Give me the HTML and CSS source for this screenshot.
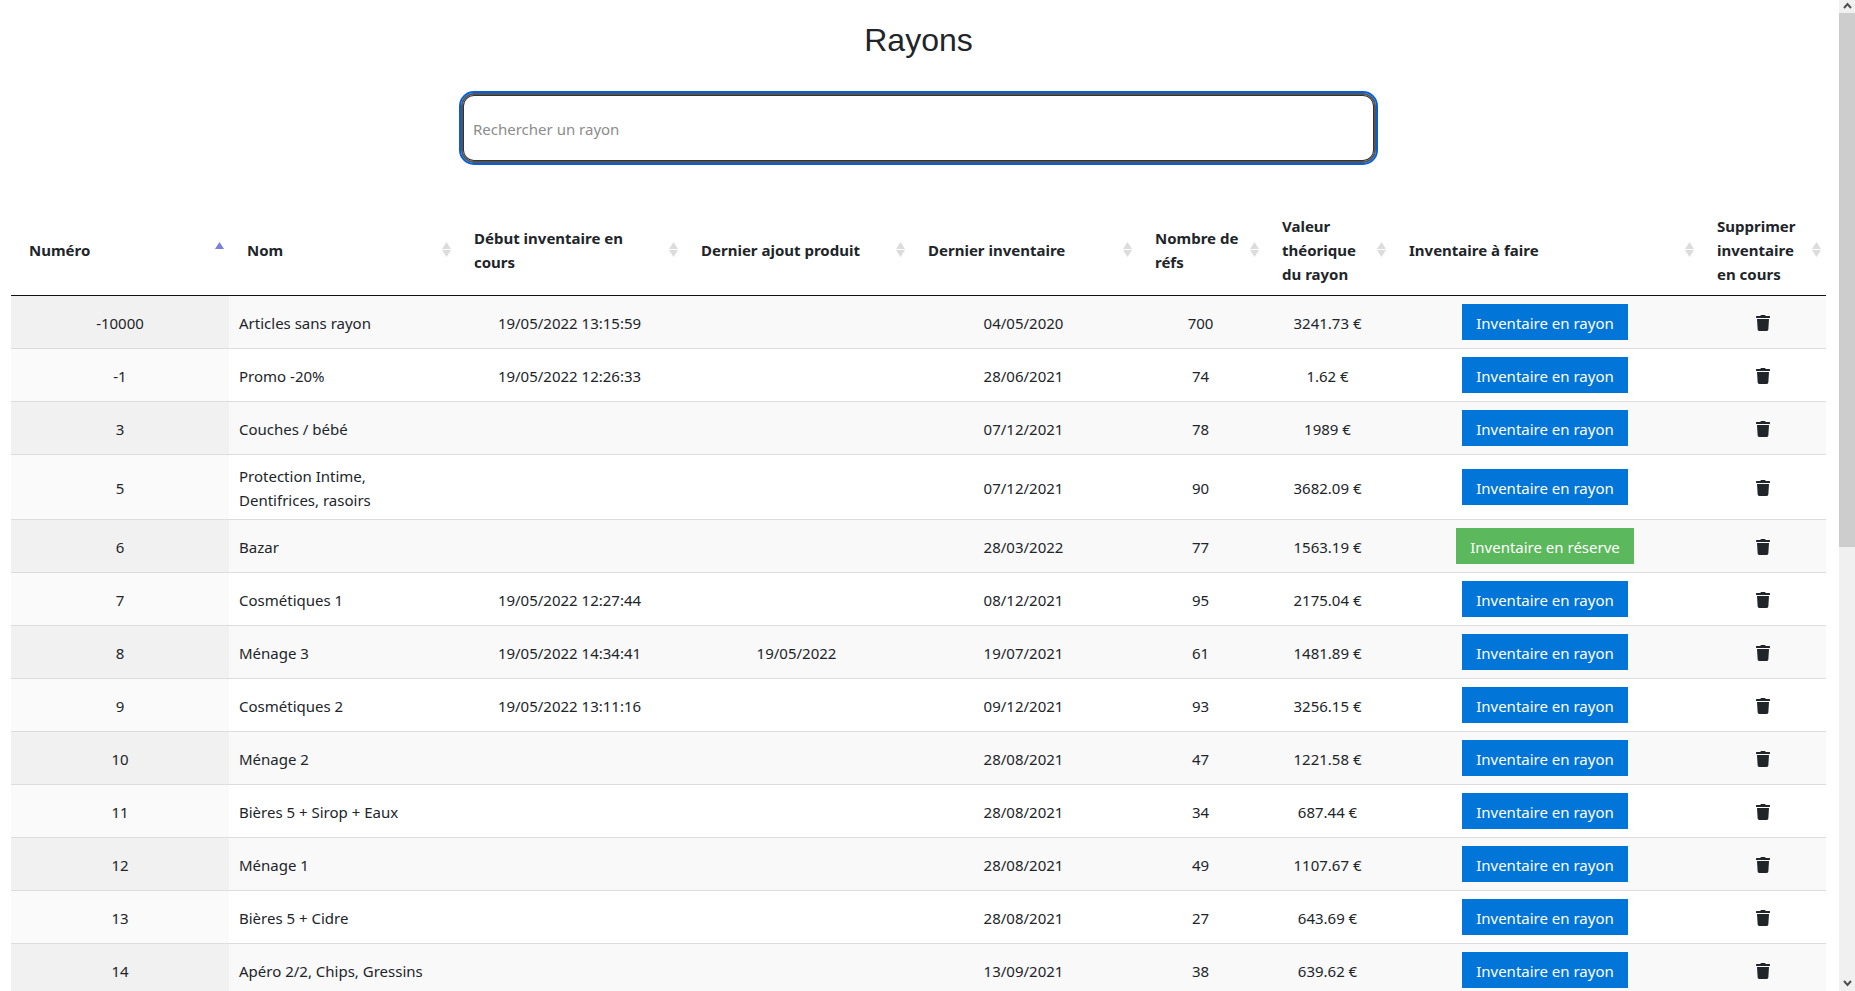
FILE: index.html
```html
<!DOCTYPE html>
<html lang="fr">
<head>
<meta charset="utf-8">
<title>Rayons</title>
<link rel="stylesheet" href="styles.css">
</head>
<body>
<svg class="sprite" aria-hidden="true">
  <symbol id="trash" viewBox="0 0 448 512"><path d="M432 32H312l-9.4-18.7A24 24 0 0 0 281.1 0H166.8a23.72 23.72 0 0 0-21.4 13.3L136 32H16A16 16 0 0 0 0 48v32a16 16 0 0 0 16 16h416a16 16 0 0 0 16-16V48a16 16 0 0 0-16-16zM53.2 467a48 48 0 0 0 47.9 45h245.8a48 48 0 0 0 47.9-45L416 128H32z"/></symbol>
  <symbol id="sort" viewBox="0 0 9 15"><path class="up" d="M4.5 0L9 7H0z"/><path class="down" d="M0 8h9l-4.500 7z"/></symbol>
</svg>
<div class="page">
  <main class="content">
    <h1 class="title">Rayons</h1>
    <input class="search" type="text" placeholder="Rechercher un rayon" aria-label="Rechercher un rayon">
    <table class="rayons">
      <colgroup><col class="c-num"><col class="c-wide"><col class="c-wide"><col class="c-wide"><col class="c-wide"><col class="c-small"><col class="c-small"><col class="c-todo"><col class="c-small"></colgroup>
      <thead>
        <tr>
          <th><div class="head">Numéro<svg class="sort asc" viewBox="0 0 9 15"><path d="M4.500 0L9 7H0z"/></svg></div></th>
          <th><div class="head">Nom<svg class="sort"><use href="#sort"/></svg></div></th>
          <th><div class="head">Début inventaire en cours<svg class="sort"><use href="#sort"/></svg></div></th>
          <th><div class="head">Dernier ajout produit<svg class="sort"><use href="#sort"/></svg></div></th>
          <th><div class="head">Dernier inventaire<svg class="sort"><use href="#sort"/></svg></div></th>
          <th><div class="head">Nombre de réfs<svg class="sort"><use href="#sort"/></svg></div></th>
          <th><div class="head">Valeur théorique du rayon<svg class="sort"><use href="#sort"/></svg></div></th>
          <th><div class="head">Inventaire à faire<svg class="sort"><use href="#sort"/></svg></div></th>
          <th><div class="head">Supprimer inventaire en cours<svg class="sort"><use href="#sort"/></svg></div></th>
        </tr>
      </thead>
      <tbody>
        <tr><td>-10000</td><td>Articles sans rayon</td><td>19/05/2022 13:15:59</td><td></td><td>04/05/2020</td><td>700</td><td>3241.73 €</td><td class="action"><button class="btn">Inventaire en rayon</button></td><td><button class="delete" aria-label="Supprimer"><svg><use href="#trash"/></svg></button></td></tr>
        <tr><td>-1</td><td>Promo -20%</td><td>19/05/2022 12:26:33</td><td></td><td>28/06/2021</td><td>74</td><td>1.62 €</td><td class="action"><button class="btn">Inventaire en rayon</button></td><td><button class="delete" aria-label="Supprimer"><svg><use href="#trash"/></svg></button></td></tr>
        <tr><td>3</td><td>Couches / bébé</td><td></td><td></td><td>07/12/2021</td><td>78</td><td>1989 €</td><td class="action"><button class="btn">Inventaire en rayon</button></td><td><button class="delete" aria-label="Supprimer"><svg><use href="#trash"/></svg></button></td></tr>
        <tr><td>5</td><td>Protection Intime, Dentifrices, rasoirs</td><td></td><td></td><td>07/12/2021</td><td>90</td><td>3682.09 €</td><td class="action"><button class="btn">Inventaire en rayon</button></td><td><button class="delete" aria-label="Supprimer"><svg><use href="#trash"/></svg></button></td></tr>
        <tr><td>6</td><td>Bazar</td><td></td><td></td><td>28/03/2022</td><td>77</td><td>1563.19 €</td><td class="action"><button class="btn reserve">Inventaire en réserve</button></td><td><button class="delete" aria-label="Supprimer"><svg><use href="#trash"/></svg></button></td></tr>
        <tr><td>7</td><td>Cosmétiques 1</td><td>19/05/2022 12:27:44</td><td></td><td>08/12/2021</td><td>95</td><td>2175.04 €</td><td class="action"><button class="btn">Inventaire en rayon</button></td><td><button class="delete" aria-label="Supprimer"><svg><use href="#trash"/></svg></button></td></tr>
        <tr><td>8</td><td>Ménage 3</td><td>19/05/2022 14:34:41</td><td>19/05/2022</td><td>19/07/2021</td><td>61</td><td>1481.89 €</td><td class="action"><button class="btn">Inventaire en rayon</button></td><td><button class="delete" aria-label="Supprimer"><svg><use href="#trash"/></svg></button></td></tr>
        <tr><td>9</td><td>Cosmétiques 2</td><td>19/05/2022 13:11:16</td><td></td><td>09/12/2021</td><td>93</td><td>3256.15 €</td><td class="action"><button class="btn">Inventaire en rayon</button></td><td><button class="delete" aria-label="Supprimer"><svg><use href="#trash"/></svg></button></td></tr>
        <tr><td>10</td><td>Ménage 2</td><td></td><td></td><td>28/08/2021</td><td>47</td><td>1221.58 €</td><td class="action"><button class="btn">Inventaire en rayon</button></td><td><button class="delete" aria-label="Supprimer"><svg><use href="#trash"/></svg></button></td></tr>
        <tr><td>11</td><td>Bières 5 + Sirop + Eaux</td><td></td><td></td><td>28/08/2021</td><td>34</td><td>687.44 €</td><td class="action"><button class="btn">Inventaire en rayon</button></td><td><button class="delete" aria-label="Supprimer"><svg><use href="#trash"/></svg></button></td></tr>
        <tr><td>12</td><td>Ménage 1</td><td></td><td></td><td>28/08/2021</td><td>49</td><td>1107.67 €</td><td class="action"><button class="btn">Inventaire en rayon</button></td><td><button class="delete" aria-label="Supprimer"><svg><use href="#trash"/></svg></button></td></tr>
        <tr><td>13</td><td>Bières 5 + Cidre</td><td></td><td></td><td>28/08/2021</td><td>27</td><td>643.69 €</td><td class="action"><button class="btn">Inventaire en rayon</button></td><td><button class="delete" aria-label="Supprimer"><svg><use href="#trash"/></svg></button></td></tr>
        <tr><td>14</td><td>Apéro 2/2, Chips, Gressins</td><td></td><td></td><td>13/09/2021</td><td>38</td><td>639.62 €</td><td class="action"><button class="btn">Inventaire en rayon</button></td><td><button class="delete" aria-label="Supprimer"><svg><use href="#trash"/></svg></button></td></tr>
      </tbody>
    </table>
  </main>
  <div class="scrollbar" aria-hidden="true">
    <svg class="arrow" viewBox="0 0 9 7"><path d="M1 6l3.500-4L8 6"/></svg>
    <div class="track"><div class="thumb"></div></div>
    <svg class="arrow" viewBox="0 0 9 7"><path d="M1 1l3.500 4L8 1"/></svg>
  </div>
</div>
</body>
</html>
```
FILE: styles.css
```css
* { box-sizing: border-box; }

body {
  margin: 0;
  background: #fff;
  color: #212529;
  font: 15px/24px "Noto Sans", "Open Sans", sans-serif;
}

.sprite { display: none; }

.page {
  display: flex;
  height: 100vh;
  overflow: hidden;
}

.content {
  flex: 1;
  min-width: 0;
  padding: 21px 13px 0 11px;
  overflow: hidden;
}

.title {
  margin: 0;
  text-align: center;
  font: 400 32px/38px "Liberation Sans", Arial, sans-serif;
}

.search {
  display: block;
  width: 50%;
  min-width: 915px;
  height: 70px;
  margin: 34px auto 44px;
  padding: 2px 10px 0;
  border: 2px solid #555;
  border-radius: 13px;
  outline: 2px solid #0060df;
  background: #fff;
  box-shadow: inset 0 0 0 1px #333;
  color: inherit;
  font: inherit;
}

.search::placeholder { color: #8c8c8c; opacity: 1; }

.rayons {
  width: 100%;
  table-layout: fixed;
  border-collapse: separate;
  border-spacing: 0;
}

.c-num { width: 218px; }
.c-wide { width: 227px; }
.c-small { width: 127px; }

.rayons th {
  padding: 7px 5px 9px 18px;
  border-bottom: 1px solid #111;
  text-align: left;
  font-weight: 700;
}

.head {
  display: flex;
  align-items: center;
  justify-content: space-between;
  gap: 4px;
}

.sort {
  flex: none;
  width: 9px;
  height: 15px;
  margin-bottom: 1px;
  fill: #dcdcdc;
}

.sort.asc { fill: #7b7fe0; }

.rayons td {
  padding: 9px 10px 7px;
  border-bottom: 1px solid #ddd;
  text-align: center;
}

.rayons td.action { padding: 8px 10px; }
.rayons td:nth-child(2) { text-align: left; }
.rayons tbody tr:nth-child(odd) { background: #f9f9f9; }
.rayons tbody tr:nth-child(odd) td:first-child { background: #f1f1f1; }
.rayons tbody tr:nth-child(even) td:first-child { background: #fafafa; }

.btn {
  display: block;
  height: 36px;
  margin: 0 auto;
  padding: 2px 14px 0;
  border: 0;
  background: #0275d8;
  color: #fff;
  font: inherit;
}

.btn.reserve { background: #5cb85c; }

.delete {
  display: block;
  margin: 0 auto;
  padding: 0;
  border: 0;
  background: none;
}

.delete svg {
  display: block;
  width: 14px;
  height: 16px;
  fill: #212529;
}

.scrollbar {
  display: flex;
  flex-direction: column;
  align-items: center;
  width: 16px;
  padding: 2px 0 4px;
  background: #f0f0f0;
}

.arrow {
  width: 9px;
  height: 7px;
  fill: none;
  stroke: #505050;
  stroke-width: 2;
}

.track {
  flex: 1;
  width: 100%;
  padding: 4px 0 2px;
}

.thumb {
  height: 55.3%;
  background: #cdcdcd;
}
```
